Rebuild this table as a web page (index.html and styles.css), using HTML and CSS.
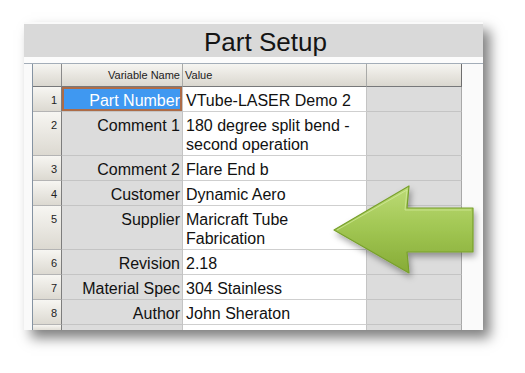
FILE: index.html
```html
<!DOCTYPE html>
<html>
<head>
<meta charset="utf-8">
<link rel="stylesheet" href="styles.css">
</head>
<body>
<div class="panel">
  <div class="titlebar">Part Setup</div>
  <div class="gap"></div>
  <div class="sheet">
    <div class="grid">
      <div class="hcell corner"></div>
      <div class="hcell hname">Variable Name</div>
      <div class="hcell hvalue">Value</div>
      <div class="hcell hextra"></div>

      <div class="rh">1</div><div class="name selected">Part Number</div><div class="val">VTube-LASER Demo 2</div><div class="extra"></div>
      <div class="rh">2</div><div class="name">Comment 1</div><div class="val">180 degree split bend -<br>second operation</div><div class="extra"></div>
      <div class="rh">3</div><div class="name">Comment 2</div><div class="val">Flare End b</div><div class="extra"></div>
      <div class="rh">4</div><div class="name">Customer</div><div class="val">Dynamic Aero</div><div class="extra"></div>
      <div class="rh">5</div><div class="name">Supplier</div><div class="val">Maricraft Tube<br>Fabrication</div><div class="extra"></div>
      <div class="rh">6</div><div class="name">Revision</div><div class="val">2.18</div><div class="extra"></div>
      <div class="rh">7</div><div class="name">Material Spec</div><div class="val">304 Stainless</div><div class="extra"></div>
      <div class="rh">8</div><div class="name">Author</div><div class="val">John Sheraton</div><div class="extra"></div>
      <div class="rh"></div><div class="name"></div><div class="val"></div><div class="extra"></div>
    </div>
  </div>
</div>
<svg class="arrow" width="170" height="120" viewBox="0 0 170 120">
  <defs>
    <linearGradient id="ag" x1="0" y1="0" x2="0" y2="1">
      <stop offset="0" stop-color="#bddb78"/>
      <stop offset="0.45" stop-color="#a3c855"/>
      <stop offset="1" stop-color="#86ab36"/>
    </linearGradient>
    <filter id="sh" x="-20%" y="-20%" width="150%" height="160%">
      <feDropShadow dx="2" dy="4" stdDeviation="3" flood-color="#000" flood-opacity="0.35"/>
    </filter>
  </defs>
  <path d="M9 52 L84 8 L82 30 L148 30 L148 74 L82 74 L84 95 Z" fill="url(#ag)" stroke="#78a02c" stroke-width="1.2" stroke-linejoin="round" filter="url(#sh)"/>
  <path d="M12 52 L82 12 L80 32 L146 32" fill="none" stroke="#d6ecA0" stroke-width="1" opacity="0.7"/>
</svg>
</body>
</html>
```

FILE: styles.css
```css
html, body {
  margin: 0;
  padding: 0;
  background: #ffffff;
}
body {
  position: relative;
  width: 525px;
  height: 373px;
  overflow: hidden;
  font-family: "Liberation Sans", Arial, sans-serif;
}
.panel {
  margin-left: 24px;
  margin-top: 22px;
  width: 459px;
  height: 308px;
  overflow: hidden;
  background: #fafafa;
  padding-top: 2px;
  box-sizing: border-box;
  box-shadow: 7px 8px 12px rgba(0, 0, 0, 0.5);
}
.titlebar {
  height: 33px;
  box-sizing: border-box;
  background: #d9d9d9;
  padding-left: 180px;
  padding-top: 3px;
  line-height: 30px;
  font-size: 26px;
  color: #141414;
}
.gap {
  height: 6px;
  background: #fcfcfc;
  border-bottom: 1px solid #a3adb8;
}
.sheet {
  padding-left: 8px;
}
.grid {
  display: grid;
  grid-template-columns: 29px 121px 184px 95px;
  width: 430px;
  border-left: 1px solid #8593a2;
}
.grid > div {
  box-sizing: border-box;
  border-right: 1px solid #c4c4c4;
  border-bottom: 1px solid #c4c4c4;
  font-size: 16px;
  line-height: 19px;
  padding: 4px 3px 1px 3px;
  color: #111;
  white-space: nowrap;
}
.grid > .hcell {
  height: 23px;
  background: linear-gradient(#f6f5f1, #dad7cf);
  font-size: 11px;
  line-height: 14px;
  padding: 4px 3px 4px 2px;
  color: #222;
  border-bottom: 1px solid #77787a;
  border-right: 1px solid #a9aaa8;
}
.grid > .hname {
  text-align: right;
  padding-right: 2px;
}
.grid > .hextra {
  border-right: 1px solid #6e6e6e;
}
.grid > .corner {
  border-right: 1px solid #8a8a8a;
}
.grid > .rh {
  background: linear-gradient(#f7f6f2, #dcd9d1);
  font-size: 11px;
  line-height: 14px;
  text-align: right;
  padding: 6px 4px 0 0;
  border-right: 1px solid #7d7d7d;
  border-bottom: 1px solid #b4b4b4;
  color: #222;
}
.grid > .name {
  background: #dcdcdc;
  text-align: right;
  padding-right: 2px;
}
.grid > .selected {
  background: #3f98f1;
  color: #ffffff;
  box-shadow: inset 0 0 0 2px #ad6c48;
}
.grid > .val {
  background: #ffffff;
  padding-left: 3px;
  border-bottom-color: #cfcfcf;
}
.grid > .extra {
  background: #dcdcdc;
  border-right: 1px solid #a8a8a8;
}
.arrow {
  position: absolute;
  left: 325px;
  top: 178px;
}
```
